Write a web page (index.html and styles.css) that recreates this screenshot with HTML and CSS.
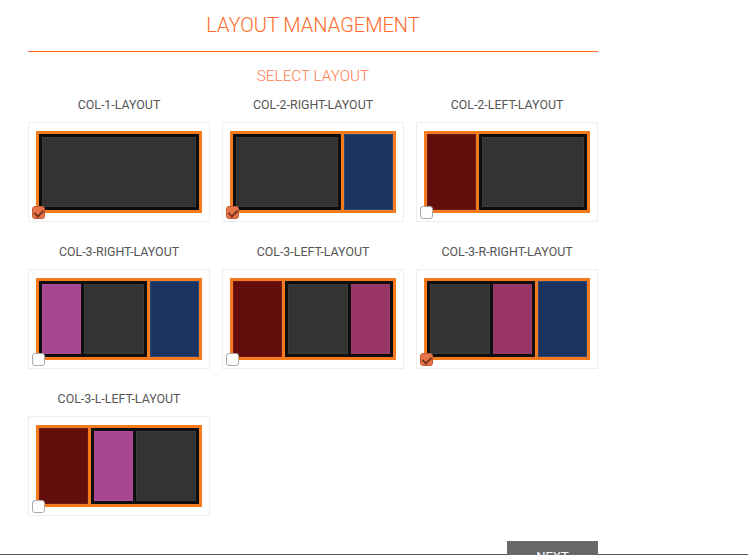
FILE: index.html
```html
<!DOCTYPE html>
<html lang="en">
<head>
<meta charset="utf-8">
<title>Layout Management</title>
<link rel="stylesheet" href="styles.css">
</head>
<body>
<div class="page">
  <h1 class="title">LAYOUT MANAGEMENT</h1>
  <div class="rule"></div>
  <h2 class="subtitle">SELECT LAYOUT</h2>
  <div class="grid">
    <div class="item">
      <div class="label">COL-1-LAYOUT</div>
      <div class="card">
        <div class="frame">
          <div class="group grow"><div class="panel dark grow"></div></div>
        </div>
        <span class="check checked"></span>
      </div>
    </div>
    <div class="item">
      <div class="label">COL-2-RIGHT-LAYOUT</div>
      <div class="card">
        <div class="frame">
          <div class="group grow"><div class="panel dark grow"></div></div>
          <div class="panel navy side"></div>
        </div>
        <span class="check checked"></span>
      </div>
    </div>
    <div class="item">
      <div class="label">COL-2-LEFT-LAYOUT</div>
      <div class="card">
        <div class="frame">
          <div class="panel maroon side"></div>
          <div class="group grow"><div class="panel dark grow"></div></div>
        </div>
        <span class="check"></span>
      </div>
    </div>
    <div class="item">
      <div class="label">COL-3-RIGHT-LAYOUT</div>
      <div class="card">
        <div class="frame">
          <div class="group grow"><div class="panel purple narrow"></div><div class="panel dark grow"></div></div>
          <div class="panel navy side"></div>
        </div>
        <span class="check"></span>
      </div>
    </div>
    <div class="item">
      <div class="label">COL-3-LEFT-LAYOUT</div>
      <div class="card">
        <div class="frame">
          <div class="panel maroon side"></div>
          <div class="group grow"><div class="panel dark grow"></div><div class="panel magenta narrow"></div></div>
        </div>
        <span class="check"></span>
      </div>
    </div>
    <div class="item">
      <div class="label">COL-3-R-RIGHT-LAYOUT</div>
      <div class="card">
        <div class="frame">
          <div class="group grow"><div class="panel dark grow"></div><div class="panel magenta narrow"></div></div>
          <div class="panel navy side"></div>
        </div>
        <span class="check checked"></span>
      </div>
    </div>
    <div class="item">
      <div class="label">COL-3-L-LEFT-LAYOUT</div>
      <div class="card">
        <div class="frame">
          <div class="panel maroon side"></div>
          <div class="group grow"><div class="panel purple narrow"></div><div class="panel dark grow"></div></div>
        </div>
        <span class="check"></span>
      </div>
    </div>
  </div>
  <div class="actions">
    <button class="btn" type="button">NEXT</button>
  </div>
</div>
<div class="footer"></div>
</body>
</html>
```

FILE: styles.css
```css
* { box-sizing: border-box; }

html, body {
  margin: 0;
  padding: 0;
  background: #ffffff;
}

body {
  font-family: Roboto, "Liberation Sans", Arial, sans-serif;
  color: #555555;
}

.page {
  width: 570px;
  margin-left: 28px;
}

.title {
  margin: 12px 0 0;
  font-size: 20px;
  line-height: 26px;
  font-weight: 300;
  color: #ff6a2a;
  text-align: center;
}

.rule {
  margin: 13px 0 0;
  height: 0;
  border-top: 1px solid #ff6a2a;
}

.subtitle {
  margin: 14px 0 0;
  font-size: 15.3px;
  line-height: 20px;
  font-weight: 300;
  color: #ff7b4f;
  text-align: center;
}

.grid {
  margin-top: 10px;
  display: grid;
  grid-template-columns: repeat(3, 182px);
  column-gap: 12px;
  row-gap: 21px;
}

.label {
  font-size: 12.4px;
  line-height: 18px;
  margin-bottom: 8px;
  text-align: center;
  color: #555555;
}

.card {
  position: relative;
  width: 182px;
  height: 100px;
  border: 1px solid #eeeeee;
  display: flex;
  align-items: center;
  justify-content: center;
}

.frame {
  width: 166px;
  height: 82px;
  background: #f57b1e;
  padding: 3px;
  display: flex;
  gap: 3px;
}

.group {
  background: #0e0e0e;
  padding: 3px;
  display: flex;
  gap: 3px;
}

.grow { flex: 1 1 0; min-width: 0; }

.panel {
  box-shadow: inset 0 0 0 1px rgba(255, 255, 255, 0.04);
}

.side { width: 49px; flex: 0 0 49px; }
.narrow { width: 39px; flex: 0 0 39px; }

.dark { background: #333333; }
.navy { background: #1b335f; box-shadow: inset 0 0 0 1px #2a4676; }
.maroon { background: #630d0d; box-shadow: inset 0 0 0 1px #6e1a13; }
.purple { background: #a84590; }
.magenta { background: #983566; }

.check {
  position: absolute;
  left: 3px;
  top: 83px;
  width: 13px;
  height: 13px;
  border: 1px solid #aaaaaa;
  border-radius: 3px;
  background: #ffffff;
}

.check.checked {
  background: #e8744a;
  border-color: #c65a36;
}

.check.checked::after {
  content: "";
  position: absolute;
  left: 3px;
  top: 1px;
  width: 4px;
  height: 7px;
  border: solid #7a3520;
  border-width: 0 2px 2px 0;
  transform: rotate(45deg);
}

.actions {
  margin-top: 25px;
  height: 13px;
  display: flex;
  justify-content: flex-end;
}

.btn {
  width: 91px;
  height: 32px;
  border: 0;
  background: #686868;
  color: #ffffff;
  font-family: Roboto, "Liberation Sans", Arial, sans-serif;
  font-size: 13px;
  padding: 0;
  line-height: 32px;
  text-align: center;
}

.footer {
  border-top: 1px solid #555555;
  height: 40px;
}
```
